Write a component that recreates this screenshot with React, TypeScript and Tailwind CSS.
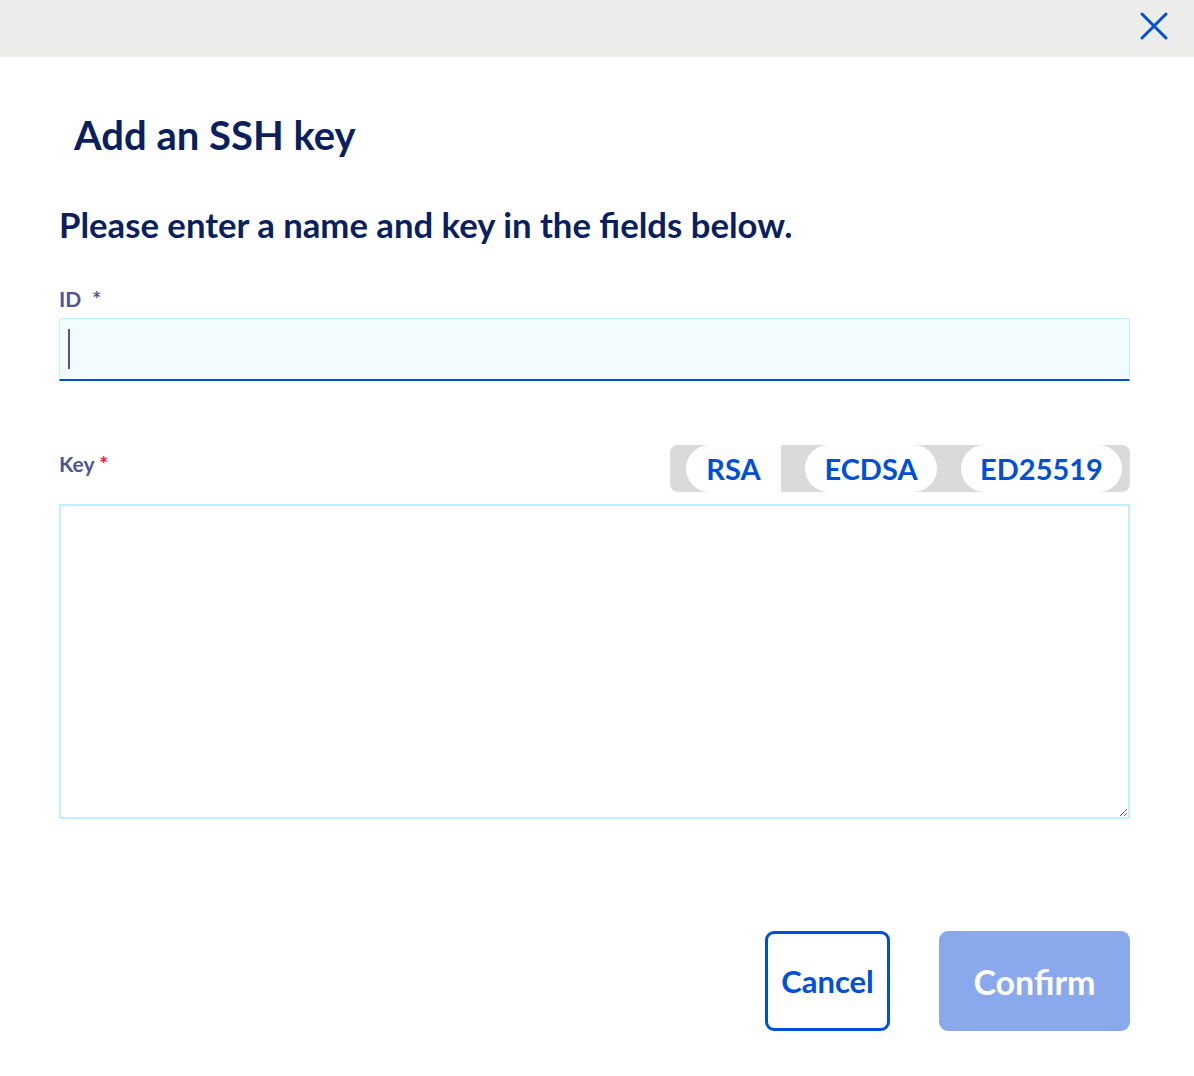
import { useState } from 'react';

const KEY_TYPES = ['RSA', 'ECDSA', 'ED25519'] as const;

export default function App() {
  const [keyType, setKeyType] = useState<string>('RSA');

  return (
    <div className="w-[1194px] h-[1076px] bg-white flex flex-col font-['Lato','Noto_Sans',sans-serif] overflow-hidden">
      {/* Header strip with close */}
      <div className="h-[57px] shrink-0 bg-[#ecedea] flex items-start justify-end pr-[25px] pt-[11px]">
        <button aria-label="Close" className="w-[30px] h-[30px] flex items-center justify-center">
          <svg width="28" height="28" viewBox="0 0 28 28" fill="none">
            <path d="M2 2 L26 26 M26 2 L2 26" stroke="#0050d7" strokeWidth="3" strokeLinecap="round" />
          </svg>
        </button>
      </div>

      <div className="flex-1 flex flex-col pl-[59px] pr-[64px]">
        <h1 className="ml-[15px] mt-[54px] text-[40px] leading-[48px] font-bold text-[#0b1f5e]">Add an SSH key</h1>
        <p className="mt-[45px] text-[34.7px] leading-[42px] font-bold text-[#0b1f5e]">
          Please enter a name and key in the fields below.
        </p>

        {/* ID */}
        <label className="mt-[40px] text-[21px] leading-[26px] font-bold text-[#4d5693]">
          ID <span className="ml-[6px]">*</span>
        </label>
        <div className="mt-[6px] h-[63px] rounded-t-[3px] border border-[#bef1fb] border-b-2 border-b-[#0050d7] bg-[#f2fcfd] flex items-center pl-[8px]">
          <div className="w-[2px] h-[40px] bg-[#4d5693]" />
        </div>

        {/* Key */}
        <div className="mt-[64px] flex items-start justify-between">
          <label className="mt-[6px] text-[21px] leading-[26px] font-bold text-[#4d5693]">
            Key <span className="text-[#e0243c]">*</span>
          </label>
          <div className="h-[47px] w-[460px] rounded-[8px] bg-[#dadada] flex items-stretch pl-[16px] pr-[8px]">
            {KEY_TYPES.map((t, i) => (
              <button
                key={t}
                onClick={() => setKeyType(t)}
                className={
                  i === 0
                    ? 'w-[95px] rounded-l-[24px] bg-white text-[29px] font-bold text-[#0050d7]'
                    : i === 1
                      ? 'ml-[24px] w-[132px] rounded-full bg-white text-[29px] font-bold text-[#0050d7]'
                      : 'ml-[24px] w-[161px] rounded-full bg-white text-[29px] font-bold text-[#0050d7]'
                }
                aria-pressed={keyType === t}
              >
                {t}
              </button>
            ))}
          </div>
        </div>
        <textarea className="mt-[12px] h-[315px] w-full border-2 border-[#bef1fb] bg-white resize-y outline-none p-2" />

        {/* Actions */}
        <div className="mt-[112px] flex justify-end gap-[49px]">
          <button className="w-[125px] h-[100px] rounded-[9px] border-[3px] border-[#0050d7] bg-white text-[31px] font-bold text-[#0050d7]">
            Cancel
          </button>
          <button className="w-[191px] h-[100px] rounded-[9px] bg-[#8aa9ec] text-[34px] font-bold text-white">
            Confirm
          </button>
        </div>
      </div>
    </div>
  );
}
